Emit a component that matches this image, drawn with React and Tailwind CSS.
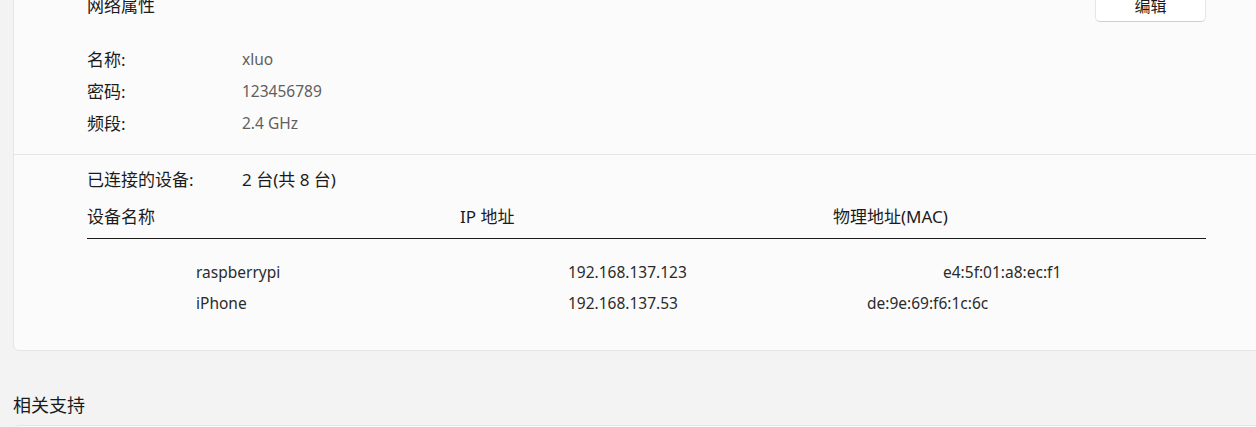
const font = { fontFamily: "'Noto Sans', 'Noto Sans CJK SC', sans-serif" }

const props = [
  { label: '名称:', value: 'xluo' },
  { label: '密码:', value: '123456789' },
  { label: '频段:', value: '2.4 GHz' },
]

const devices = [
  { name: 'raspberrypi', ip: '192.168.137.123', mac: 'e4:5f:01:a8:ec:f1', macPad: 'pl-[110px]' },
  { name: 'iPhone', ip: '192.168.137.53', mac: 'de:9e:69:f6:1c:6c', macPad: 'pl-[34px]' },
]

export default function App() {
  return (
    <div className="w-[1256px] h-[427px] overflow-hidden bg-[#f3f3f3] text-[#1b1b1b]" style={font}>
      <div className="ml-[13px] -mt-[30px] w-[1270px] rounded-[6px] border border-[#e5e5e5] bg-[#fbfbfb]">
        {/* network properties */}
        <div className="pt-[19px] pb-[14px] border-b border-[#e5e5e5]">
          <div className="ml-[73px] w-[1119px]">
            <div className="flex h-[32px] items-center justify-between">
              <span className="text-[17px]">网络属性</span>
              <button className="h-[32px] w-[111px] rounded-[5px] border border-[#e5e5e5] border-b-[#cfcfcf] bg-white text-[16px] text-[#1b1b1b]">
                编辑
              </button>
            </div>
            <div className="mt-[22px]">
              {props.map((p) => (
                <div key={p.label} className="flex h-[32px] items-center">
                  <span className="w-[155px] text-[17px]">{p.label}</span>
                  <span className="text-[15.5px] text-[#5f5f5f]">{p.value}</span>
                </div>
              ))}
            </div>
          </div>
        </div>

        {/* connected devices */}
        <div className="pt-[9px] pb-[31px]">
          <div className="ml-[73px] w-[1119px]">
            <div className="flex h-[32px] items-center">
              <span className="w-[155px] text-[17px]">已连接的设备:</span>
              <span className="text-[17px]">2 台(共 8 台)</span>
            </div>
            <div className="mt-[5px] grid h-[32px] grid-cols-3 items-center text-[17px]">
              <span>设备名称</span>
              <span>IP 地址</span>
              <span>物理地址(MAC)</span>
            </div>
            <div className="mt-[5px] h-px bg-[#1b1b1b]" />
            <div className="mt-[18px]">
              {devices.map((d) => (
                <div key={d.name} className="grid h-[31px] grid-cols-3 items-center text-[15.5px] text-[#2b2b2b]">
                  <span className="pl-[109px]">{d.name}</span>
                  <span className="pl-[108px]">{d.ip}</span>
                  <span className={d.macPad}>{d.mac}</span>
                </div>
              ))}
            </div>
          </div>
        </div>
      </div>

      <div className="ml-[13px] mt-[42px] h-[24px] leading-[24px] text-[18px]">相关支持</div>
      <div className="ml-[13px] mt-[8px] h-[40px] w-[1270px] rounded-[6px] border border-[#e5e5e5] bg-[#fbfbfb]" />
    </div>
  )
}
